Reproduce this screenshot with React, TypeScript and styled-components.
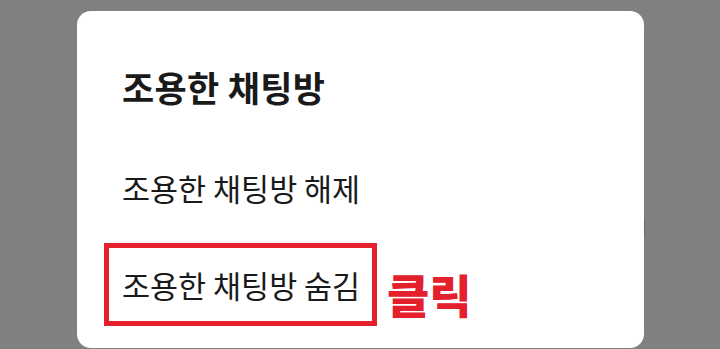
import React from 'react'
import styled, { createGlobalStyle } from 'styled-components'

const GlobalStyle = createGlobalStyle`
    html, body {
        margin: 0;
        padding: 0;
        background: #808080;
        height: 349px;
        overflow: hidden;
    }
    body {
        font-family: "Noto Sans CJK KR", "Noto Sans", sans-serif;
    }
`

const Screen = styled.div`
    width: 720px;
    height: 349px;
    padding: 11px 0 0 77px;
    box-sizing: border-box;
`

const Sheet = styled.div`
    position: relative;
    width: 567px;
    height: 337px;
    background: #ffffff;
    border-radius: 14px;
    padding: 56px 27px 0;
    box-sizing: border-box;
    display: flex;
    flex-direction: column;
`

const Title = styled.h2`
    margin: 0 0 39px 18px;
    font-size: 35px;
    line-height: 40px;
    font-weight: 700;
    color: #1a1a1a;
    letter-spacing: 0.3px;
`

const Menu = styled.div`
    display: flex;
    flex-direction: column;
    gap: 14px;
`

const Row = styled.div`
    display: flex;
    align-items: center;
    gap: 10px;
`

const MenuItem = styled.div<{ marked?: boolean }>`
    height: 83px;
    width: 273px;
    box-sizing: border-box;
    display: flex;
    align-items: center;
    padding-left: 13px;
    border: 5px solid ${props => (props.marked ? '#e3202b' : 'transparent')};
    font-size: 30.5px;
    font-weight: 400;
    color: #1a1a1a;
    white-space: nowrap;
`

const Note = styled.span`
    margin-top: 16px;
    font-size: 46px;
    line-height: 50px;
    font-weight: 900;
    color: #e3202b;
`

// the little dotted scrollbar mark on the right edge
const ScrollMark = styled.div`
    position: absolute;
    right: -1px;
    top: 208px;
    height: 17px;
    border-right: 1px dotted #555;
`

const App: React.FC = () => {
    return (
        <>
            <GlobalStyle />
            <Screen>
                <Sheet>
                    <Title>조용한 채팅방</Title>
                    <Menu>
                        <MenuItem>조용한 채팅방 해제</MenuItem>
                        <Row>
                            <MenuItem marked>조용한 채팅방 숨김</MenuItem>
                            <Note>클릭</Note>
                        </Row>
                    </Menu>
                    <ScrollMark />
                </Sheet>
            </Screen>
        </>
    )
}

export default App
